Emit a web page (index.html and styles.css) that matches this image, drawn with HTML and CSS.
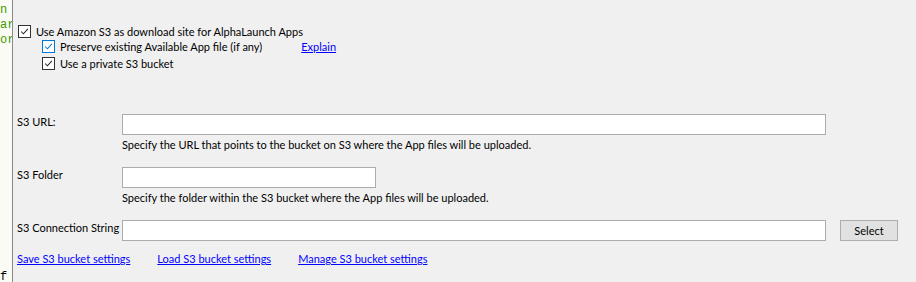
FILE: index.html
```html
<!DOCTYPE html>
<html lang="en">

<head>
    <meta charset="UTF-8">
    <title>S3 Settings</title>
    <link rel="stylesheet" href="styles.css">
</head>

<body>
    <div class="editor-strip">
        <pre class="code">n c
ar
or</pre>
        <pre class="code tail">f</pre>
    </div>
    <main class="panel">
        <div class="checks">
            <label class="check">
                <span class="box checked"><svg viewBox="0 0 13 13"><path d="M2.5 6.5 L5.2 9.2 L10.5 3.5" /></svg></span>
                Use Amazon S3 as download site for AlphaLaunch Apps
            </label>
            <div class="sub">
                <div class="check-row">
                    <label class="check">
                        <span class="box checked focus"><svg viewBox="0 0 13 13"><path d="M2.5 6.5 L5.2 9.2 L10.5 3.5" /></svg></span>
                        Preserve existing Available App file (if any)
                    </label>
                    <a href="#" class="link explain">Explain</a>
                </div>
                <label class="check">
                    <span class="box checked"><svg viewBox="0 0 13 13"><path d="M2.5 6.5 L5.2 9.2 L10.5 3.5" /></svg></span>
                    Use a private S3 bucket
                </label>
            </div>
        </div>

        <div class="fields">
            <div class="field">
                <label class="field-label">S3 URL:</label>
                <div class="field-body">
                    <input type="text" class="input wide">
                    <p class="hint">Specify the URL that points to the bucket on S3 where the App files will be uploaded.</p>
                </div>
            </div>
            <div class="field">
                <label class="field-label">S3 Folder</label>
                <div class="field-body">
                    <input type="text" class="input short">
                    <p class="hint">Specify the folder within the S3 bucket where the App files will be uploaded.</p>
                </div>
            </div>
            <div class="field">
                <label class="field-label">S3 Connection String</label>
                <div class="field-body inline">
                    <input type="text" class="input wide">
                    <button type="button" class="btn">Select</button>
                </div>
            </div>
        </div>

        <div class="links">
            <a href="#" class="link">Save S3 bucket settings</a>
            <a href="#" class="link">Load S3 bucket settings</a>
            <a href="#" class="link">Manage S3 bucket settings</a>
        </div>
    </main>
</body>

</html>
```

FILE: styles.css
```css
body {
    margin: 0;
    padding: 0;
    background-color: #f0f0f0;
    font-family: Lato, "Segoe UI", sans-serif;
    font-size: 11px;
    color: #000000;
    display: flex;
    height: 282px;
    overflow: hidden;
}

.editor-strip {
    width: 12px;
    flex-shrink: 0;
    background-color: #fbfbf5;
    border-right: 1px solid #8a8a8a;
    overflow: hidden;
    display: flex;
    flex-direction: column;
    justify-content: space-between;
}

.code {
    margin: 0;
    padding-top: 3px;
    font-family: "Liberation Mono", monospace;
    font-size: 12px;
    line-height: 15px;
    color: #3c9a00;
}

.code.tail {
    color: #000000;
    line-height: 10px;
    padding: 0;
}

.panel {
    flex: 1;
    padding: 25px 0 0 4px;
}

/* checkboxes */

.check {
    display: flex;
    align-items: center;
    height: 13px;
    white-space: nowrap;
}

.box {
    width: 11px;
    height: 11px;
    border: 1px solid #333333;
    background: #ffffff;
    margin: 0 5px 0 1px;
    display: inline-block;
}

.box svg {
    display: block;
    width: 11px;
    height: 11px;
}

.box path {
    fill: none;
    stroke: #222222;
    stroke-width: 1.2;
}

.box.focus {
    border-color: #0078d7;
}

.box.focus path {
    stroke: #0078d7;
}

.sub {
    padding-left: 24px;
    padding-top: 2px;
}

.check-row {
    display: flex;
    align-items: center;
    margin-bottom: 4px;
}

.explain {
    margin-left: 39px;
}

/* fields */

.fields {
    margin-top: 44px;
}

.field {
    display: flex;
    margin-bottom: 14px;
}

.field:last-child {
    margin-bottom: 10px;
}

.field-label {
    width: 105px;
    flex-shrink: 0;
    line-height: 15px;
    white-space: nowrap;
}

.field-body.inline {
    display: flex;
    align-items: center;
}

.input {
    height: 21px;
    box-sizing: border-box;
    border: 1px solid #acacac;
    background: #ffffff;
    margin: 0;
    display: block;
}

.input.wide {
    width: 704px;
}

.input.short {
    width: 254px;
}

.hint {
    margin: 2px 0 0 0;
    line-height: 16px;
    white-space: nowrap;
}

.btn {
    margin-left: 14px;
    width: 58px;
    height: 21px;
    background-color: #e1e1e1;
    border: 1px solid #adadad;
    font-family: inherit;
    font-size: 11px;
    padding: 0;
}

/* links */

.link {
    color: #0000ff;
    text-decoration: underline;
    white-space: nowrap;
}

.links {
    display: flex;
    gap: 27px;
    line-height: 15px;
}
```
